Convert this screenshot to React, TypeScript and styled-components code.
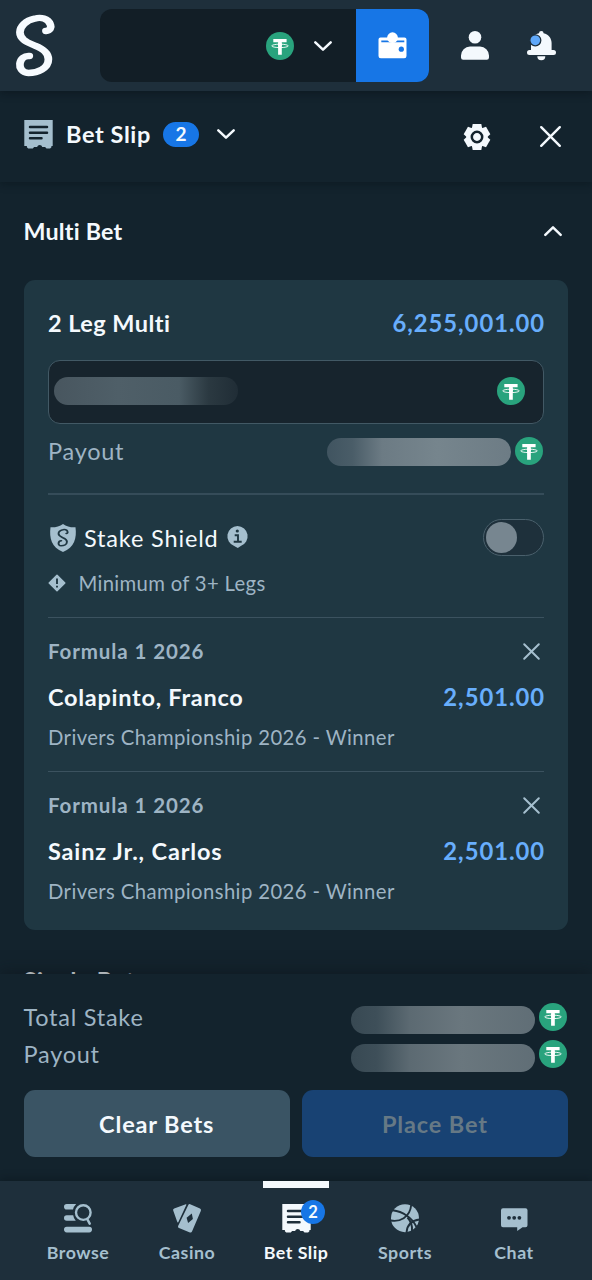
import React from "react";
import styled, { createGlobalStyle } from "styled-components";

const c = {
  bar: "#1e2f3b",
  page: "#13232d",
  card: "#1f3742",
  line: "#354c59",
  white: "#f4f9fd",
  muted: "#9eb4c4",
  icon: "#a5bfce",
  blue: "#1776e6",
  odds: "#68aefc",
};

const Global = createGlobalStyle`
  * { box-sizing: border-box; }
  body { margin: 0; background: ${c.page}; }
  button { border: 0; padding: 0; background: none; font: inherit; color: inherit; display: flex; }
  svg { display: block; flex: none; overflow: visible; }
`;

const Screen = styled.div`
  width: 592px;
  height: 1280px;
  display: flex;
  flex-direction: column;
  overflow: hidden;
  background: ${c.page};
  color: ${c.white};
  font-family: Lato, "Liberation Sans", sans-serif;
  font-size: 23.5px;
`;

const Header = styled.header`
  height: 91px;
  flex: none;
  display: flex;
  align-items: center;
  padding: 0 36px 0 16px;
  background: ${c.bar};
  box-shadow: 0 2px 8px rgba(6, 14, 20, 0.45);
  z-index: 2;
`;

const Balance = styled.div`
  display: flex;
  width: 329px;
  height: 73px;
  margin: 0 32px 0 45px;
  border-radius: 12px;
  overflow: hidden;
  background: #121e26;
`;

const CurrencyButton = styled.button`
  flex: 1;
  align-items: center;
  justify-content: flex-end;
  gap: 19.5px;
  padding-right: 24.5px;
`;

const WalletButton = styled.button`
  width: 73px;
  align-items: center;
  justify-content: center;
  background: ${c.blue};
`;

const HeaderIcons = styled.div`
  display: flex;
  gap: 38px;
`;

const SlipBar = styled.div`
  height: 91px;
  flex: none;
  display: flex;
  align-items: center;
  padding: 0 31px 5px 24px;
  background: ${c.page};
  box-shadow: 0 2px 8px rgba(6, 14, 20, 0.4);
  z-index: 1;
`;

const Title = styled.h1`
  margin: 0 12px 0 13px;
  font-size: 23.5px;
  line-height: 28px;
  font-weight: 700;
  letter-spacing: 0.6px;
`;

const CountPill = styled.span`
  width: 36px;
  height: 25px;
  margin-right: 18px;
  border-radius: 13px;
  background: ${c.blue};
  font-size: 19px;
  line-height: 24px;
  font-weight: 700;
  text-align: center;
`;

const SlipActions = styled.div`
  display: flex;
  align-items: center;
  gap: 50px;
  margin: 5px 0 0 auto;
`;

const Content = styled.main`
  height: 792px;
  flex: none;
  padding: 0 24px 0 23.5px;
  overflow: hidden;
`;

const SectionHeader = styled.div<{ $h?: number }>`
  display: flex;
  justify-content: space-between;
  align-items: center;
  height: ${(p) => p.$h ?? 98}px;
  padding-right: 6px;
`;

const SectionTitle = styled.h2<{ $spacing?: number }>`
  margin: 0;
  font-size: 23.3px;
  line-height: 28px;
  font-weight: 700;
  letter-spacing: ${(p) => p.$spacing ?? 0.2}px;
`;

const Card = styled.section`
  height: 650px;
  padding: 0 24px 0 24.5px;
  border-radius: 11px;
  background: ${c.card};
`;

const Row = styled.div<{ $h: number; $top?: number; $bottom?: number }>`
  display: flex;
  align-items: center;
  justify-content: space-between;
  height: ${(p) => p.$h}px;
  padding: ${(p) => p.$top ?? 0}px 0 ${(p) => p.$bottom ?? 0}px;
`;

const Heading = styled.span<{ $spacing: number }>`
  font-weight: 700;
  letter-spacing: ${(p) => p.$spacing}px;
`;

const Odds = styled.span`
  margin-right: -1px;
  font-size: 23.8px;
  font-weight: 700;
  color: ${c.odds};
  letter-spacing: 0.95px;
`;

const StakeInput = styled.div`
  display: flex;
  align-items: center;
  justify-content: space-between;
  height: 64px;
  padding: 0 18px 1px 5px;
  border: 1px solid #425965;
  border-radius: 12px;
  background: #17242d;
`;

const Redacted = styled.span<{ $tone: "input" | "card" | "footer" }>`
  width: 184px;
  height: 28px;
  border-radius: 14px;
  background: ${(p) =>
    p.$tone === "input"
      ? "linear-gradient(90deg, #48565f 0%, #4f5f68 35%, #4a5b64 68%, #2b3941 84%, #202d36 100%)"
      : p.$tone === "card"
      ? "linear-gradient(90deg, #405460 0%, #4a5d68 14%, #6c7b84 30%, #76858d 60%, #6d7c85 100%)"
      : "linear-gradient(90deg, #384953 0%, #3e4f59 14%, #5c6a72 32%, #6a777e 60%, #606e76 100%)"};
`;

const Amount = styled.span<{ $drop: number }>`
  display: flex;
  align-items: center;
  gap: 4px;
  padding-right: 1px;
  ${Redacted} {
    margin-top: ${(p) => p.$drop * 2}px;
  }
`;

const Muted = styled.span`
  color: ${c.muted};
  letter-spacing: 0.75px;
`;

const Divider = styled.hr<{ $strong?: boolean }>`
  height: ${(p) => (p.$strong ? 2 : 1)}px;
  margin: 0;
  border: 0;
  background: ${(p) => (p.$strong ? c.line : "#3b525f")};
`;

const Shield = styled.div`
  height: 122px;
  padding-top: 24px;
`;

const ShieldLabel = styled.div`
  display: flex;
  align-items: center;
  padding-left: 2px;
  > span { margin: 0 8px 0 8px; letter-spacing: 0.85px; }
  > svg:last-child { margin-top: -1px; }
`;

const Toggle = styled.span`
  display: block;
  width: 61px;
  height: 37px;
  padding: 2px;
  border: 1px solid #4a606c;
  border-radius: 19px;
  background: #1e303b;
  &::before {
    content: "";
    display: block;
    width: 31px;
    height: 31px;
    border-radius: 50%;
    background: #778690;
  }
`;

const Note = styled.div`
  display: flex;
  align-items: center;
  gap: 12.5px;
  height: 24px;
  margin-top: 15px;
  font-size: 20.3px;
  color: ${c.muted};
  letter-spacing: 0.32px;
`;

const Leg = styled.article`
  height: 153px;
  padding-top: 19px;
`;

const LegTop = styled.div`
  display: flex;
  align-items: center;
  justify-content: space-between;
  height: 28px;
  padding-right: 4px;
`;

const League = styled.span`
  font-size: 20.5px;
  font-weight: 700;
  color: ${c.muted};
  letter-spacing: 0.9px;
`;

const Market = styled.div`
  font-size: 20.3px;
  line-height: 28px;
  color: ${c.muted};
  letter-spacing: 0.4px;
`;

const Footer = styled.footer`
  height: 207px;
  flex: none;
  padding: 24px 24px 0 23.5px;
  background: ${c.page};
  box-shadow: 0 -3px 14px rgba(14, 20, 26, 0.5);
  z-index: 1;
`;

const Actions = styled.div`
  display: flex;
  gap: 12px;
  margin-top: 18px;
`;

const Action = styled.button<{ $primary?: boolean }>`
  flex: 1;
  height: 67px;
  align-items: center;
  justify-content: center;
  border-radius: 11px;
  font-weight: 700;
  letter-spacing: 0.85px;
  background: ${(p) => (p.$primary ? "#184273" : "#3a5464")};
  color: ${(p) => (p.$primary ? "#667985" : c.white)};
`;

const Nav = styled.nav`
  height: 99px;
  flex: none;
  display: grid;
  grid-template-columns: repeat(5, 109px);
  justify-content: center;
  background: ${c.bar};
  box-shadow: 0 -2px 8px rgba(6, 14, 20, 0.35);
  z-index: 2;
`;

const Tab = styled.a<{ $active?: boolean }>`
  display: flex;
  flex-direction: column;
  align-items: center;
  color: ${(p) => (p.$active ? c.white : c.icon)};
  font-size: 17.8px;
  line-height: 22px;
  font-weight: 700;
  letter-spacing: 0.5px;
  &::before {
    content: "";
    width: 66px;
    height: 7px;
    margin-bottom: 15px;
    background: ${(p) => (p.$active ? c.white : "transparent")};
  }
`;

const TabIcon = styled.span`
  position: relative;
  height: 30px;
  margin: 1px 0 7px;
`;

const TabBadge = styled.span`
  position: absolute;
  top: -4px;
  left: 19.5px;
  width: 24px;
  height: 24px;
  border-radius: 50%;
  background: ${c.blue};
  color: ${c.white};
  font-size: 16.5px;
  line-height: 24px;
  letter-spacing: 0;
  text-align: center;
`;

const Tether = () => (
  <svg width="28" height="28" viewBox="0 0 28 28">
    <circle cx="14" cy="14" r="14" fill="#29a37d" />
    <path d="M7.300 7h13.300v3.200h-4.800v12.600h-3.700V10.200H7.300z" fill="#fff" />
    <ellipse cx="14" cy="13.900" rx="8.300" ry="1.700" fill="none" stroke="#fff" strokeWidth="0.900" />
    <path d="M12.100 11.300h3.700v3.300h-3.700z" fill="#fff" />
  </svg>
);

const Chevron = ({ up = false }: { up?: boolean }) => (
  <svg width="18" height="10" viewBox="0 0 18 10" fill="none" stroke="#f4f9fd" strokeWidth="2.500" strokeLinecap="round" strokeLinejoin="round">
    <path d={up ? "M1.300 8.800 9 1.400l7.700 7.400" : "M1.300 1.300 9 8.700l7.700-7.400"} />
  </svg>
);

const Close = ({ size, color, width }: { size: number; color: string; width: number }) => (
  <svg width={size} height={size} viewBox={`0 0 ${size} ${size}`} stroke={color} strokeWidth={width} strokeLinecap="round">
    <path d={`M1.200 1.200 ${size - 1.2} ${size - 1.2}M${size - 1.2} 1.200 1.200 ${size - 1.2}`} />
  </svg>
);

const sCurve =
  "M113 92C123 91 127 82 124 73C118 53 100 50 85 55C64 60 49 78 49 96C49 118 68 126 86 136C107 147 119 158 119 177C119 205 92 218 70 218C53 217 48 202 49 190C51 174 60 166 72 167";

const SMark = ({ width, height, color, weight }: { width: number; height: number; color: string; weight: number }) => (
  <svg width={width} height={height} viewBox="48 44 117 186" fill="none" stroke={color} strokeLinecap="round" strokeLinejoin="round">
    <path d={sCurve} transform="scale(1.220 1)" strokeWidth={weight} />
  </svg>
);

const Receipt = ({ fill, line }: { fill: string; line: string }) => (
  <svg width="29" height="29" viewBox="0 0 29 29">
    <path d="M.3 0h28.400v26h-1.300v1.200l-1.300 1.200h-3.600l-1.400-1.500h-2.800a2.700 2.700 0 0 0-5.200 0h-3l-1.300 1.500H4.200L2.900 27.200V26H.3z" fill={fill} />
    <path d="M6 7h17M6 12.700h17M6 18.300h11.500" stroke={line} strokeWidth="2.500" strokeLinecap="round" />
  </svg>
);

const Wallet = () => (
  <svg width="29" height="27" viewBox="0 0 29 27">
    <path d="M2.500 5.500h24a2 2 0 0 1 2 2V24a2.300 2.300 0 0 1-2.300 2.300H2.800A2.300 2.300 0 0 1 .5 24V7.500a2 2 0 0 1 2-2z" fill="#fff" />
    <path d="M3.300 8.400h23v1.800h-23z" fill={c.blue} />
    <circle cx="14.500" cy="5.700" r="5.400" fill="#fff" />
    <circle cx="23.300" cy="17.200" r="2.600" fill={c.blue} />
  </svg>
);

const User = () => (
  <svg width="28" height="29" viewBox="0 0 28 29" fill={c.white}>
    <circle cx="14" cy="6.300" r="6.300" />
    <path d="M9 15.500h10a9 9 0 0 1 9 9v2a2.200 2.200 0 0 1-2.200 2.200H2.200A2.200 2.200 0 0 1 0 26.500v-2a9 9 0 0 1 9-9z" />
  </svg>
);

const Bell = () => (
  <svg width="29" height="29" viewBox="0 0 29 29">
    <path d="M12 2.200a2.300 2.300 0 0 1 4.600 0c4.800 1 8 5 8 9.800v7h1.900a2.400 2.400 0 0 1 0 5h-24a2.400 2.400 0 0 1 0-5H4v-7c0-4.800 3.200-8.800 8-9.800zM10.300 25.300h8a4 4 0 0 1-8 0z" fill={c.white} />
    <circle cx="8.300" cy="9.300" r="5.500" fill="#5fa8fa" stroke={c.bar} strokeWidth="1.300" />
  </svg>
);

const Gear = () => (
  <svg width="26" height="26" viewBox="-13 -13 26 26">
    <g fill={c.white}>
      <circle r="10.600" />
      {[0, 60, 120, 180, 240, 300].map((a) => (
        <path key={a} transform={`rotate(${a})`} d="M-4.300-12.900h8.600l1 5H-5.300z" />
      ))}
    </g>
    <circle r="5.200" fill="none" stroke={c.page} strokeWidth="2.500" />
  </svg>
);

const ShieldIcon = () => (
  <svg width="26" height="28" viewBox="0 0 26 28">
    <path d="M13 0c3.500 2.600 8 3.600 12.500 3.300C26.900 14 24.500 23.600 13 28 1.500 23.600-.9 14 .5 3.300 5 3.600 9.500 2.600 13 0z" fill={c.icon} />
    <g transform="translate(7.400 4.600)">
      <SMark width={11.5} height={18.5} color={c.card} weight={16} />
    </g>
  </svg>
);

const Info = () => (
  <svg width="21" height="22" viewBox="0 0 21 22">
    <path d="M10.500 0a10.300 10.300 0 0 1 3.300 20L10.800 22l-3.600-2A10.300 10.300 0 0 1 10.500 0z" fill={c.icon} />
    <circle cx="10.300" cy="5" r="1.600" fill={c.card} />
    <path d="M7.700 9.300h3.300v6.200M6.700 15.700h8" fill="none" stroke={c.card} strokeWidth="1.900" />
  </svg>
);

const Warning = () => (
  <svg width="18" height="18" viewBox="0 0 18 18">
    <path d="M9 1.200 16.800 9 9 16.800 1.200 9z" fill={c.icon} stroke={c.icon} strokeWidth="1.500" strokeLinejoin="round" />
    <path d="M9 4.500v5.500M9 11.800v1.700" stroke={c.card} strokeWidth="1.900" />
  </svg>
);

const Browse = () => (
  <svg width="28" height="29" viewBox="0 0 28 29" fill="none" stroke="currentColor">
    <path d="M2.800 0h9.400A11 11 0 0 0 9 5.600H2.800a2.800 2.800 0 0 1 0-5.600zM2.800 11.200h6.400a10.500 10.500 0 0 0 2.600 5.600h-9a2.800 2.800 0 0 1 0-5.600z" fill="currentColor" stroke="none" />
    <circle cx="19.300" cy="8.600" r="7.300" strokeWidth="2.400" />
    <path d="m23.500 15.500 2.200 4.200" strokeWidth="2.500" strokeLinecap="round" />
    <path d="M2.800 25.600h22.400" strokeWidth="5.600" strokeLinecap="round" />
  </svg>
);

const Casino = () => (
  <svg width="28" height="29" viewBox="0 0 28 29" fill="currentColor">
    <path d="M12.800.3 1.200 4.400Q-.3 5 .2 6.600l4 11.200q.5 1.300 1.200.1L13.400.7q.2-.6-.6-.4z" />
    <path fillRule="evenodd" d="M15.300.9q.6-1.200 1.900-.7l9.800 4.300q1.400.8.9 2.200L19 27.600q-.7 1.400-2.100.8l-10.900-4.300q-1.500-.8-.9-2.200zM18.800 9.500l-5.200 4.200 1.500 5.200 4.800-3.900z" />
  </svg>
);

const Ball = () => (
  <svg width="28" height="29" viewBox="0 0 28 29" fill="none">
    <circle cx="14" cy="14.200" r="14" fill="currentColor" />
    <g stroke={c.bar} strokeWidth="1.900">
      <path d="M1.500 6.300C12 7.500 21.500 14 25.500 23" />
      <path d="M0 16.500C8 18 19 14 20.200 1" />
      <path d="M15.500 28.500C16 22 20 16.500 28.500 15.500" />
      <path d="M16.500 13.500c3.500 3.800 5 8.500 4.500 13.500" />
    </g>
  </svg>
);

const Chat = () => (
  <svg width="27" height="29" viewBox="0 0 27 29">
    <path d="M2 4.300h22.500a2 2 0 0 1 2 2v15a2 2 0 0 1-2 2H21.500l-5.300 3.600v-3.600H2a2 2 0 0 1-2-2v-15a2 2 0 0 1 2-2z" fill="currentColor" />
    <g fill={c.bar}>
      <circle cx="8" cy="13.800" r="1.900" />
      <circle cx="13.200" cy="13.800" r="1.900" />
      <circle cx="18.400" cy="13.800" r="1.900" />
    </g>
  </svg>
);

const legs = [
  { name: "Colapinto, Franco", spacing: 0.73 },
  { name: "Sainz Jr., Carlos", spacing: 0.85 },
];

const tabs = [
  { label: "Browse", icon: <Browse /> },
  { label: "Casino", icon: <Casino /> },
  { label: "Bet Slip", icon: <Receipt fill={c.white} line={c.bar} />, count: 2 },
  { label: "Sports", icon: <Ball /> },
  { label: "Chat", icon: <Chat /> },
];

export default function App() {
  return (
    <Screen>
      <Global />
      <Header>
        <SMark width={39} height={62} color="#f7fbff" weight={19} />
        <Balance>
          <CurrencyButton>
            <Tether />
            <Chevron />
          </CurrencyButton>
          <WalletButton>
            <Wallet />
          </WalletButton>
        </Balance>
        <HeaderIcons>
          <User />
          <Bell />
        </HeaderIcons>
      </Header>

      <SlipBar>
        <Receipt fill={c.icon} line={c.page} />
        <Title>Bet Slip</Title>
        <CountPill>2</CountPill>
        <Chevron />
        <SlipActions>
          <Gear />
          <Close size={21} color={c.white} width={2.4} />
        </SlipActions>
      </SlipBar>

      <Content>
        <SectionHeader>
          <SectionTitle>Multi Bet</SectionTitle>
          <Chevron up />
        </SectionHeader>
        <Card>
          <Row $h={79.5} $top={6}>
            <Heading $spacing={0.45}>2 Leg Multi</Heading>
            <Odds>6,255,001.00</Odds>
          </Row>
          <StakeInput>
            <Redacted $tone="input" />
            <Tether />
          </StakeInput>
          <Row $h={69.5} $bottom={15}>
            <Muted>Payout</Muted>
            <Amount $drop={1}>
              <Redacted $tone="card" />
              <Tether />
            </Amount>
          </Row>
          <Divider $strong />
          <Shield>
            <Row $h={37}>
              <ShieldLabel>
                <ShieldIcon />
                <span>Stake Shield</span>
                <Info />
              </ShieldLabel>
              <Toggle />
            </Row>
            <Note>
              <Warning />
              Minimum of 3+ Legs
            </Note>
          </Shield>
          {legs.map((leg) => (
            <React.Fragment key={leg.name}>
              <Divider />
              <Leg>
                <LegTop>
                  <League>Formula 1 2026</League>
                  <Close size={17} color={c.icon} width={2} />
                </LegTop>
                <Row $h={57.5} $top={7}>
                  <Heading $spacing={leg.spacing}>{leg.name}</Heading>
                  <Odds>2,501.00</Odds>
                </Row>
                <Market>Drivers Championship 2026 - Winner</Market>
              </Leg>
            </React.Fragment>
          ))}
        </Card>
        <SectionHeader $h={100}>
          <SectionTitle $spacing={0.75}>Single Bets</SectionTitle>
          <Chevron up />
        </SectionHeader>
      </Content>

      <Footer>
        <Row $h={37}>
          <Muted>Total Stake</Muted>
          <Amount $drop={3}>
            <Redacted $tone="footer" />
            <Tether />
          </Amount>
        </Row>
        <Row $h={37}>
          <Muted>Payout</Muted>
          <Amount $drop={4}>
            <Redacted $tone="footer" />
            <Tether />
          </Amount>
        </Row>
        <Actions>
          <Action>Clear Bets</Action>
          <Action $primary>Place Bet</Action>
        </Actions>
      </Footer>

      <Nav>
        {tabs.map((t) => (
          <Tab key={t.label} $active={!!t.count}>
            <TabIcon>
              {t.icon}
              {t.count && <TabBadge>{t.count}</TabBadge>}
            </TabIcon>
            {t.label}
          </Tab>
        ))}
      </Nav>
    </Screen>
  );
}
